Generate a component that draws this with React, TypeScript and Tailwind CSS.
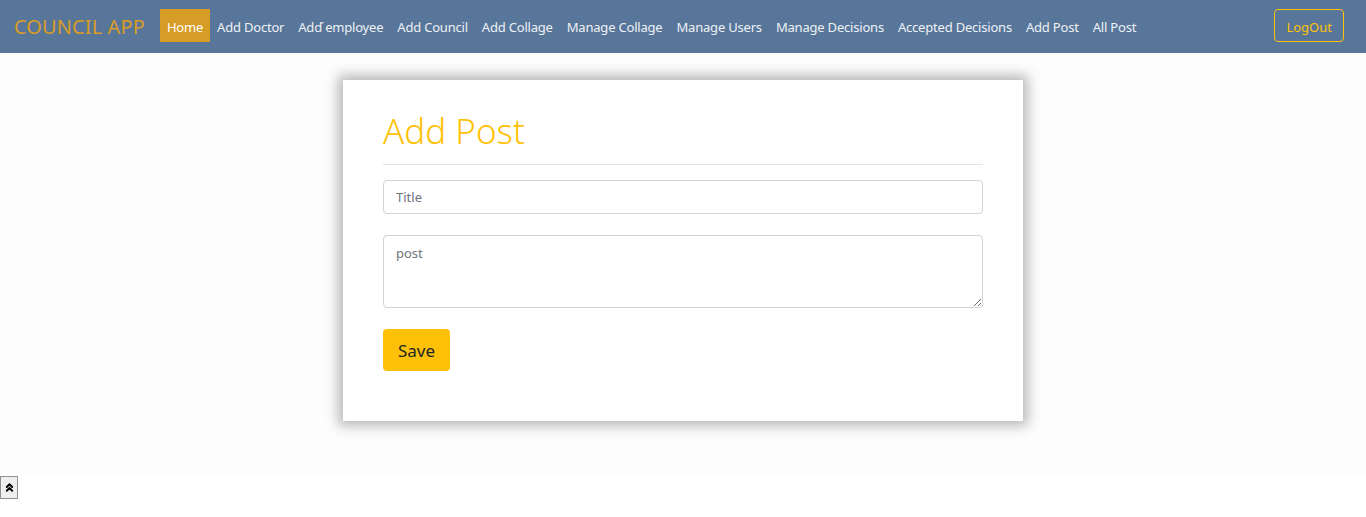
import { ChevronsUp } from "lucide-react";

const links = [
  "Add Doctor",
  "Add \u0301employee",
  "Add Council",
  "Add Collage",
  "Manage Collage",
  "Manage Users",
  "Manage Decisions",
  "Accepted Decisions",
  "Add Post",
  "All Post",
];

export default function App() {
  return (
    <div className="min-h-[517px] bg-white font-['Noto_Sans',sans-serif]">
      <nav className="flex h-[53px] items-center bg-[#58769a] pb-[2px] pl-[14px] pr-[22px]">
        <span className="mr-[15px] mt-[2px] text-[20px] leading-none tracking-[0.1px] text-[#d99d25]">COUNCIL APP</span>
        <ul className="flex items-center">
          <li className="flex h-[33px] items-center bg-[#d69c26] px-[7px] pt-[4px] text-[13px] tracking-[-0.2px] text-white">Home</li>
          {links.map((l) => (
            <li key={l} className="flex h-[33px] items-center px-[7px] pt-[4px] text-[13px] tracking-[-0.2px] text-[#eef1f5]">
              {l}
            </li>
          ))}
        </ul>
        <button className="ml-auto h-[33px] rounded-[4px] border border-[#ffc107] px-[11px] pt-[4px] text-[13px] text-[#ffc107]">
          LogOut
        </button>
      </nav>

      <main className="h-[422px] bg-[#fdfdfd] pt-[27px]">
        <div className="mx-auto w-[680px] bg-white px-10 pb-[50px] pt-[29px] shadow-[0_0_12px_5px_rgba(0,0,0,0.27)]">
          <h1 className="text-[35px] font-light leading-[43px] text-[#ffc107]">Add Post</h1>
          <hr className="mb-[15px] mt-[12px] border-[#e5e5e5]" />
          <input
            placeholder="Title"
            className="block h-[34px] w-full rounded-[4px] border border-[#ced4da] px-3 text-[13px] outline-none placeholder:text-[#6c757d]"
          />
          <textarea
            placeholder="post"
            className="mt-[21px] block h-[73px] w-full rounded-[4px] border border-[#ced4da] px-3 py-[8px] text-[13px] outline-none placeholder:text-[#6c757d]"
          />
          <button className="mt-[21px] h-[42px] rounded-[4px] bg-[#ffc107] px-[15px] pt-[2px] text-[17px] text-[#212529]">Save</button>
        </div>
      </main>

      <button className="mt-px flex h-[23px] w-[18px] items-center justify-center border border-[#8f8f8f] bg-[#efefef]">
        <ChevronsUp size={13} strokeWidth={3.5} className="text-black" />
      </button>
    </div>
  );
}
